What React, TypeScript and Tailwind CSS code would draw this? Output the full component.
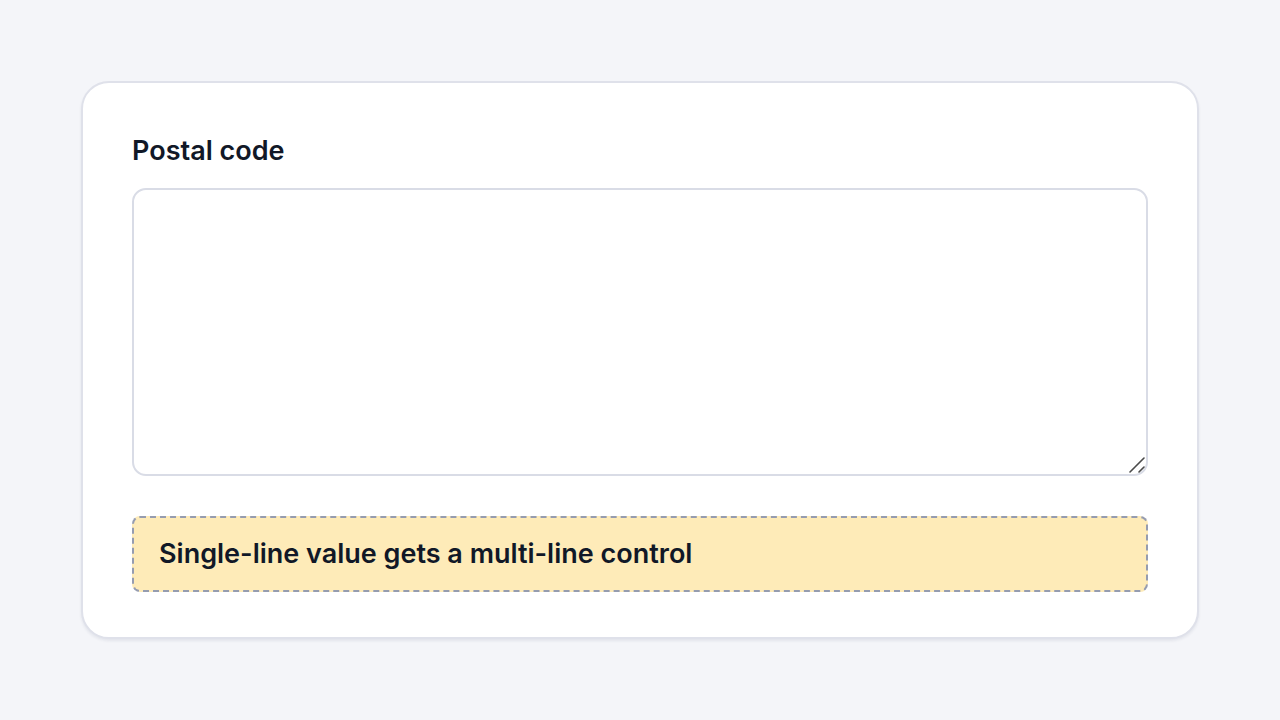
export default function App() {
    return (
        <div className="min-h-screen bg-[#f4f5f9] flex items-center justify-center" style={{ fontFamily: 'Inter, "Noto Sans", sans-serif' }}>
            <div className="w-[1118px] bg-white border-2 border-[#dfe1ea] rounded-[28px] shadow-[0_2px_3px_rgba(30,40,80,0.08)] px-[49px] pt-[52px] pb-[45px]">
                {/* Field */}
                <label htmlFor="postal" className="block text-[27px] leading-[32px] font-semibold text-[#111827]">
                    Postal code
                </label>
                <div className="relative mt-[21px]">
                    <textarea
                        id="postal"
                        className="block w-full h-[288px] border-2 border-[#d9dce6] rounded-[14px] bg-white outline-none resize-none"
                    />
                    <svg className="absolute right-[2px] bottom-[3px] pointer-events-none" width="18" height="18" viewBox="0 0 18 18">
                        <path d="M2 17 L16 3 M11 17 L16 12" stroke="#4b4b4b" strokeWidth="1.6" strokeLinecap="round" fill="none" />
                    </svg>
                </div>

                {/* Notice */}
                <div className="mt-[40px] h-[76px] flex items-center px-[25px] bg-[#feebb8] border-2 border-dashed border-[#959cb0] rounded-[8px]">
                    <span className="text-[27px] font-semibold text-[#111827]">Single-line value gets a multi-line control</span>
                </div>
            </div>
        </div>
    );
}
